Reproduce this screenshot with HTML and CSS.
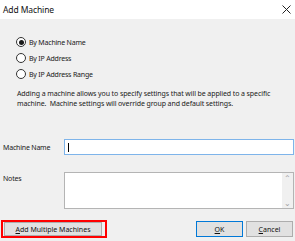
FILE: index.html
```html
<!DOCTYPE html>
<html lang="en">
<head>
    <meta charset="UTF-8">
    <title>Add Machine</title>
    <link rel="stylesheet" href="styles.css">
</head>
<body>
    <div class="window">
        <div class="titlebar">
            <span class="title">Add Machine</span>
            <svg class="close" width="9" height="9" viewBox="0 0 9 9">
                <path d="M0.5 0.5 L8.5 8.5 M8.5 0.5 L0.5 8.5" stroke="#222" stroke-width="1" fill="none"/>
            </svg>
        </div>

        <div class="content">
            <div class="options">
                <label class="radio"><span class="dot checked"></span>By Machine Name</label>
                <label class="radio"><span class="dot"></span>By IP Address</label>
                <label class="radio"><span class="dot"></span>By IP Address Range</label>
            </div>

            <p class="desc">Adding a machine allows you to specify settings that will be applied to a specific<br>machine.&nbsp; Machine settings will override group and default settings.</p>

            <div class="field name-row">
                <label>Machine Name</label>
                <div class="textbox focused"><span class="caret"></span></div>
            </div>

            <div class="field notes-row">
                <label>Notes</label>
                <div class="textarea">
                    <div class="scrollbar">
                        <span class="arrow">&#8963;</span>
                        <span class="arrow">&#8964;</span>
                    </div>
                </div>
            </div>

            <div class="footer">
                <span class="highlight"><button class="btn wide"><u>A</u>dd Multiple Machines</button></span>
                <div class="actions">
                    <button class="btn default"><u>O</u>K</button>
                    <button class="btn"><u>C</u>ancel</button>
                </div>
            </div>
        </div>
    </div>
</body>
</html>
```

FILE: styles.css
```css
body { margin: 0; background: #f0f0f0; font-family: "Noto Sans", "Open Sans", sans-serif; font-size: 7px; letter-spacing: -0.2px; color: #1a1a1a; }
.window { width: 295px; height: 241px; overflow: hidden; }

.titlebar { height: 19px; background: #fff; display: flex; align-items: center; justify-content: space-between; padding: 0 4px 0 3px; }
.title { font-size: 8.5px; letter-spacing: -0.1px; color: #111; }
.close { display: block; }

.content { padding: 15px 1px 0 0; }

.options { display: flex; flex-direction: column; padding-left: 16px; }
.radio { display: flex; align-items: center; height: 16px; }
.dot { width: 8px; height: 8px; border: 1px solid #333; border-radius: 50%; background: #fff; margin-right: 3px; display: flex; align-items: center; justify-content: center; }
.dot.checked::after { content: ""; width: 5px; height: 5px; border-radius: 50%; background: #1a1a1a; }

.desc { margin: 7px 0 0 17px; line-height: 10px; white-space: nowrap; letter-spacing: -0.1px; }

.field { display: flex; padding-left: 3px; }
.field label { width: 61px; flex: none; }
.name-row { margin-top: 30px; align-items: center; }
.textbox { flex: 1; height: 14px; background: #fff; border: 1px solid #7eb4ea; display: flex; align-items: center; padding-left: 3px; }
.caret { width: 1px; height: 9px; background: #000; }

.notes-row { margin-top: 17px; }
.notes-row label { padding-top: 2px; }
.textarea { flex: 1; height: 35px; background: #fff; border: 1px solid #b4b4b4; display: flex; justify-content: flex-end; }
.scrollbar { width: 11px; background: #f0f0f0; display: flex; flex-direction: column; justify-content: space-between; align-items: center; color: #a0a0a0; font-size: 8px; line-height: 10px; }

.footer { display: flex; justify-content: space-between; align-items: center; margin-top: 11px; padding-left: 1px; }
.highlight { border: 2px solid #f00; display: flex; padding: 0 3px 0 1px; }
.actions { display: flex; gap: 3px; padding-right: 1px; }
.btn { font: inherit; color: #111; background: #e1e1e1; border: 1px solid #adadad; height: 16px; width: 47px; padding: 0; }
.btn.wide { width: 98px; height: 14px; }
.btn.default { border-color: #0078d7; }
```
